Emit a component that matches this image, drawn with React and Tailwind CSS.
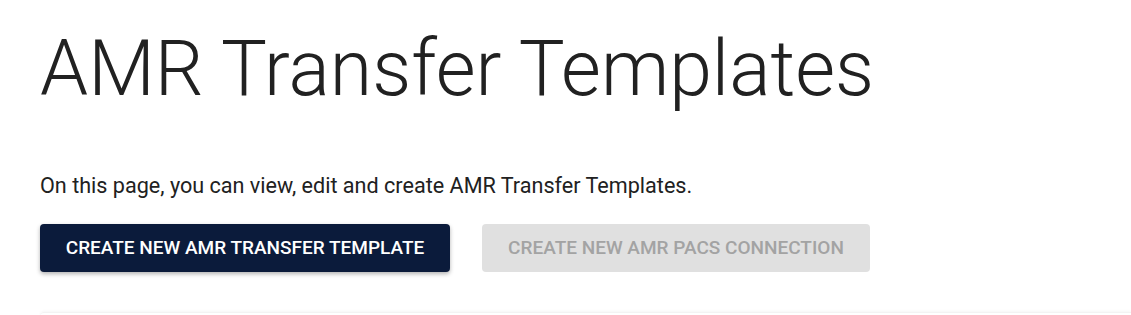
export default function App() {
    return (
        <div className="h-[315px] bg-white pl-10 pt-[23px] font-['Roboto',sans-serif] overflow-hidden">
            <h1 className="text-[77px] font-light leading-[1.2] text-[#212121]">AMR Transfer Templates</h1>

            <p className="mt-[59px] text-[21.6px] leading-6 text-[#212121]">
                On this page, you can view, edit and create AMR Transfer Templates.
            </p>

            <div className="mt-[26px] flex gap-8">
                <button className="h-12 w-[410px] rounded bg-[#0b1b3b] text-[19px] font-medium uppercase text-white shadow-[0_2px_4px_rgba(0,0,0,0.3)]">
                    Create new AMR transfer template
                </button>
                <button disabled className="h-12 w-[388px] rounded bg-[#e0e0e0] text-[19px] font-medium uppercase text-[#a3a3a3]">
                    Create new AMR PACS connection
                </button>
            </div>

            <div className="mt-[40px] h-1 rounded-tl shadow-[0_-1px_3px_rgba(0,0,0,0.04)] border-t border-[#f3f3f3]" />
        </div>
    );
}
